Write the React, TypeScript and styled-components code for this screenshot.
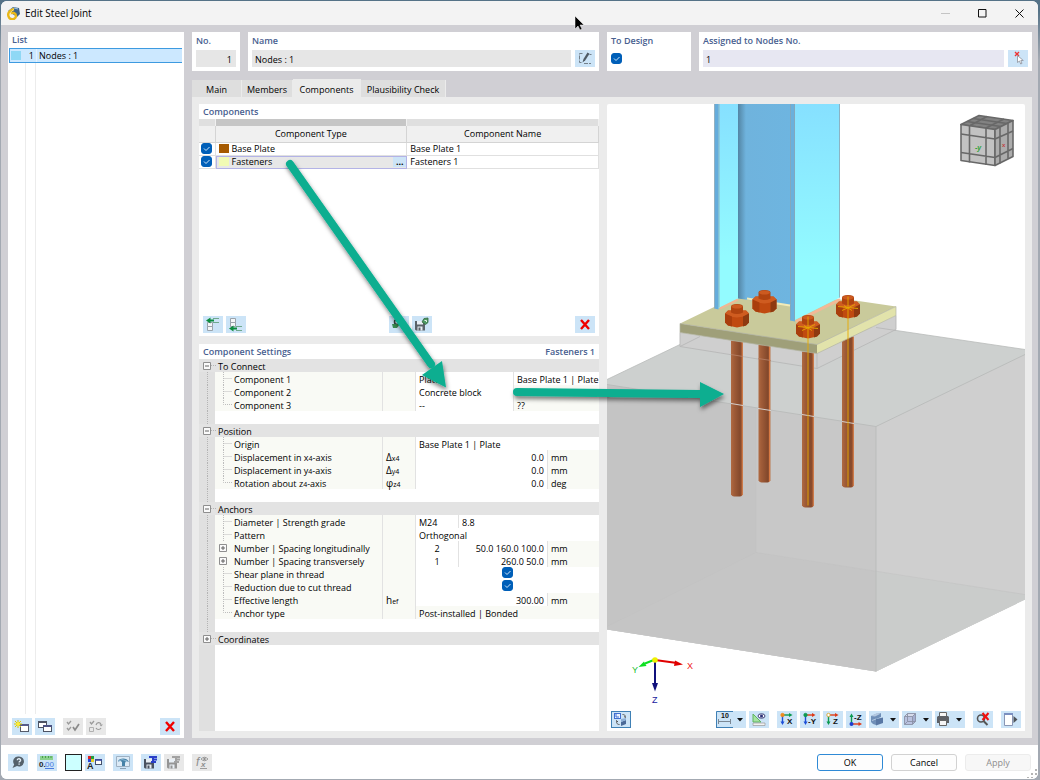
import React, { useState } from "react";
import styled, { createGlobalStyle, css } from "styled-components";

const blue = "#48608f";
const tint = "#cce4f7";

const Global = createGlobalStyle`
  *, *::before, *::after { box-sizing: border-box; }
  html, body { margin: 0; padding: 0; }
  body {
    background: #8f99a3;
    color: #000;
    font-family: "Open Sans", "Noto Sans", sans-serif;
    font-size: 9px;
    font-weight: 500;
    line-height: 13px;
  }
  button, input { font: inherit; color: inherit; }
`;

const Desktop = styled.div`
  position: relative;
  display: flex;
  min-height: 100vh;
  padding: 1px 2px 1px 1px;
  background: linear-gradient(#557287 0 10px, #a3a9b2 60px);
`;

const Window = styled.div`
  flex: 1;
  min-width: 0;
  display: flex;
  flex-direction: column;
  border-radius: 6px;
  overflow: hidden;
  background: #fff;
`;

const TitleBar = styled.header`
  display: flex;
  align-items: center;
  height: 24px;
  padding: 0 0 0 6px;
  background: #f3f3f3;
`;

const Title = styled.h1`
  flex: 1;
  margin: 0 0 0 4px;
  font-size: 10px;
  font-weight: 400;
`;

const CaptionButton = styled.button<{ $dim?: boolean }>`
  width: 37px;
  height: 24px;
  padding: 0;
  border: 0;
  background: none;
  display: grid;
  place-items: center;
  color: ${(p) => (p.$dim ? "#c4c4c4" : "#111")};
`;

const Main = styled.main`
  flex: 1;
  display: grid;
  grid-template-columns: 176px minmax(0, 1fr);
  gap: 8px;
  padding: 7px;
  padding-right: 6px;
  background: #d0cfd4;
`;

const Panel = styled.section`
  display: flex;
  flex-direction: column;
  min-width: 0;
  background: #fff;
`;

const PanelTitle = styled.h2`
  display: flex;
  justify-content: space-between;
  height: 15px;
  margin: 0;
  padding: 0 4px;
  font-size: 9px;
  font-weight: 600;
  line-height: 15px;
  color: ${blue};
`;

const NodeList = styled.ul`
  flex: 1;
  display: flex;
  flex-direction: column;
  list-style: none;
  margin: 0;
  padding: 1px 2px 0 1px;
`;

const ListGrid = css`
  display: grid;
  grid-template-columns: 17px 10px 1fr;
`;

const NodeItem = styled.button`
  ${ListGrid}
  align-items: center;
  width: 100%;
  height: 15px;
  padding: 0;
  text-align: left;
  border: 1px solid #3d9ae0;
  border-right: 0;
  background: #cce8ff;
`;

const NodeCell = styled.span<{ $end?: boolean }>`
  height: 13px;
  padding: 0 ${(p) => (p.$end ? 2 : 0)}px 0 ${(p) => (p.$end ? 0 : 2)}px;
  text-align: ${(p) => (p.$end ? "right" : "left")};
  border-right: ${(p) => (p.$end ? "1px solid #e4f2fb" : "0")};
`;

const Swatch = styled.span<{ $color: string }>`
  flex: none;
  display: block;
  width: 10px;
  height: 9px;
  margin: 0 1px;
  background: ${(p) => p.$color};
`;

const ListFiller = styled.li`
  ${ListGrid}
  flex: 1;
  span { border-right: 1px solid #ececec; }
  span:last-child { border: 0; }
`;

const ButtonBar = styled.div<{ $top?: number }>`
  flex: none;
  display: flex;
  gap: 3px;
  padding: ${(p) => p.$top ?? 0}px 4px 3px;
`;

const Gap = styled.span<{ $w?: number }>`
  flex: ${(p) => (p.$w ? `0 0 ${p.$w}px` : "1")};
`;

const IconButton = styled.button<{ $wide?: boolean; $framed?: boolean }>`
  flex: none;
  display: flex;
  align-items: center;
  width: ${(p) => (p.$wide ? 30 : 20)}px;
  height: 17px;
  padding: 0;
  border: 0;
  background: ${tint};
  box-shadow: ${(p) => (p.$framed ? "inset 0 0 0 1px #3f80b5" : "none")};
  &:disabled { background: #e8e8e8; }
  svg { display: block; flex: none; }
`;

const ColorButton = styled.button`
  width: 17px;
  height: 17px;
  border: 1px solid #222;
  background: #ccffff;
  padding: 0;
`;

const Workspace = styled.div`
  display: flex;
  flex-direction: column;
  min-width: 0;
`;

const Cards = styled.div`
  display: grid;
  grid-template-columns: minmax(0, 407fr) minmax(0, 425fr);
  gap: 8px;
  margin-bottom: 8px;
`;

const CardPair = styled.div<{ $first: number }>`
  display: grid;
  grid-template-columns: ${(p) => p.$first}px minmax(0, 1fr);
  gap: 8px;
`;

const Card = styled.div`
  display: flex;
  flex-direction: column;
  gap: 2px;
  height: 39px;
  padding: 0 4px 4px;
  background: #fff;
`;

const CardLabel = styled.label`
  height: 16px;
  line-height: 17px;
  font-weight: 600;
  color: ${blue};
`;

const CardRow = styled.div`
  display: flex;
  gap: 4px;
  align-items: center;
  min-height: 17px;
`;

const Field = styled.input<{ $end?: boolean; $lilac?: boolean }>`
  flex: 1;
  min-width: 0;
  height: 17px;
  padding: 1px 4px 0 3px;
  border: 0;
  border-radius: 0;
  text-align: ${(p) => (p.$end ? "right" : "left")};
  background: ${(p) => (p.$lilac ? "#e7e7f2" : "#e6e6e6")};
`;

const Tabs = styled.div`
  display: flex;
  align-items: flex-end;
  height: 18px;
`;

const Tab = styled.button<{ $active: boolean; $w: number }>`
  width: ${(p) => p.$w}px;
  height: ${(p) => (p.$active ? 18 : 17)}px;
  padding: 2px 0 0;
  border: 0;
  border-right: 1px solid #ebebeb;
  background: ${(p) => (p.$active ? "#ebebeb" : "#dedede")};
`;

const TabBody = styled.div`
  flex: 1;
  display: grid;
  grid-template-columns: minmax(0, 400fr) minmax(0, 418fr);
  gap: 8px;
  padding: 7px;
  background: #ebebeb;
`;

const Column = styled.div`
  display: grid;
  grid-template-rows: 232px minmax(0, 1fr);
  gap: 8px;
`;

const Table = styled.table`
  width: 100%;
  table-layout: fixed;
  border-collapse: collapse;
`;

const Strip = styled.th<{ $dark?: boolean }>`
  height: 7px;
  padding: 0;
  background: ${(p) => (p.$dark ? "#c6c6c6" : "#dfdfdf")};
  border-right: 1px solid #f0f0f0;
`;

const Head = styled.th`
  height: 16px;
  padding: 0;
  font-weight: 500;
  background: #f0f0f0;
  border-right: 1px solid #d4d4d4;
  border-bottom: 1px solid #d4d4d4;
`;

const Cell = styled.td<{ $active?: boolean; $tight?: boolean }>`
  height: 13px;
  padding: 0 0 0 ${(p) => (p.$tight ? 2 : 3)}px;
  line-height: 12px;
  border-right: 1px solid #e0e0e0;
  border-bottom: 1px solid #e0e0e0;
  ${(p) =>
    p.$active &&
    css`
      background: #e7e7e7;
      border-color: #b3b3e6;
      box-shadow: inset 1px 0 #b3b3e6, inset 0 1px #b3b3e6;
    `}
`;

const TypeContent = styled.div`
  display: flex;
  align-items: center;
  gap: 2px;
`;

const MoreButton = styled.button`
  width: 13px;
  height: 10px;
  margin-left: auto;
  padding: 0;
  border: 0;
  font-weight: 700;
  line-height: 6px;
  background: ${tint};
`;

const CheckBox = styled.span`
  display: inline-grid;
  width: 11px;
  height: 11px;
  vertical-align: top;
  > * { grid-area: 1 / 1; }
  input {
    appearance: none;
    width: 11px;
    height: 11px;
    margin: 0;
    border: 1px solid #005fb8;
    border-radius: 3px;
    background: #fff;
  }
  input:checked { background: #005fb8; }
  svg { pointer-events: none; }
`;

const Tree = styled.div`
  flex: 1;
  display: flex;
  flex-direction: column;
`;

const Gutter = styled.div`
  flex: none;
  width: 16px;
  background: #e0e0e0;
  display: flex;
  justify-content: center;
`;

const GutterLine = styled.span`
  border-left: 1px dotted #b4b4b4;
`;

const GroupRow = styled.div`
  display: flex;
  align-items: center;
  height: 13px;
  background: #e3e3e3;
`;

const GroupName = styled.span`
  padding-top: 2px;
`;

const Dash = styled.span`
  width: 5px;
  margin-right: 2px;
  border-top: 1px dotted #b4b4b4;
`;

const Toggle = styled.button`
  flex: none;
  width: 8px;
  height: 8px;
  margin-left: 4px;
  padding: 0;
  border: 0;
  background: none;
  svg { display: block; }
`;

const PropRow = styled.div`
  display: flex;
  height: 13px;
  line-height: 15px;
`;

const PropLabel = styled.div`
  flex: 0 0 168px;
  display: flex;
  align-items: flex-start;
  background: #f9faf5;
  border-right: 1px solid #e2e2e2;
  white-space: nowrap;
`;

const Branch = styled.span`
  flex: none;
  display: flex;
  align-items: center;
  width: 19px;
  height: 13px;
  svg { display: block; }
`;

const Symbol = styled.div`
  flex: 0 0 33px;
  padding-left: 3px;
  background: #f9faf5;
  border-right: 1px solid #e2e2e2;
  font-size: 10px;
`;

const Sub = styled.span`
  font-size: 7px;
`;

const Value = styled.div<{ $w?: number; $align?: string; $shade?: boolean; $line?: boolean }>`
  flex: ${(p) => (p.$w ? `0 0 ${p.$w}px` : "1 1 0")};
  min-width: 0;
  padding: 0 3px;
  overflow: hidden;
  white-space: nowrap;
  text-align: ${(p) => p.$align ?? "left"};
  background: ${(p) => (p.$shade ? "#f9faf5" : "#fff")};
  border-right: ${(p) => (p.$line ? "1px solid #e2e2e2" : "0")};
`;

const GutterFill = styled.div`
  flex: 1;
  display: flex;
`;

const Viewer = styled.section`
  display: flex;
  flex-direction: column;
  min-width: 0;
  background: #fff;
  border-radius: 2px 2px 0 0;
  overflow: hidden;
`;

const Scene = styled.svg`
  flex: 1 1 0;
  min-height: 0;
  width: 100%;
  display: block;
`;

const Footer = styled.footer`
  display: flex;
  align-items: center;
  gap: 3px;
  height: 34px;
  padding: 0 7px;
  background: #fff;
`;

const DialogButton = styled.button<{ $primary?: boolean }>`
  width: 66px;
  height: 17px;
  padding: 0;
  border: 1px solid ${(p) => (p.$primary ? "#2f8ad6" : "#d2d2d2")};
  border-radius: 3px;
  background: #fdfdfd;
  &:disabled {
    color: #8d8d8d;
    background: #f7f7f7;
    border-color: #ececec;
  }
`;

const DialogButtons = styled.div`
  display: flex;
  gap: 8px;
  margin-left: auto;
`;

const Annotation = styled.svg`
  position: absolute;
  left: 0;
  top: 0;
  width: 100%;
  height: 100%;
  pointer-events: none;
`;

/* ---------- icons: all drawn on a 20 x 17 field ---------- */

const Ico = ({ children, w = 20 }: { children: React.ReactNode; w?: number }) => (
  <svg width={w} height="17" viewBox={`0 0 ${w} 17`} fill="none" aria-hidden="true">
    {children}
  </svg>
);

const DeleteIcon = () => (
  <Ico>
    <path d="M6 4l8 9M14 4l-8 9" stroke="#f00000" strokeWidth="2.4" />
  </Ico>
);
const NewIcon = () => (
  <Ico>
    <rect x="8.500" y="6.500" width="8" height="7" fill="#fff" stroke="#555b6a" />
    <path d="M8 7h9" stroke="#555b8a" strokeWidth="2" />
    <path d="M6 2v8M2 6h8M3 3l6 6M9 3l-6 6" stroke="#d9c800" />
    <circle cx="6" cy="6" r="1.800" fill="#ffee33" />
  </Ico>
);
const CopyIcon = () => (
  <Ico>
    <rect x="3.500" y="3.500" width="8" height="6" fill="#fff" stroke="#4c5364" />
    <path d="M3 4h9" stroke="#4c5364" strokeWidth="2" />
    <rect x="8.500" y="7.500" width="8" height="6" fill="#fff" stroke="#4c5364" />
    <path d="M8 8h9" stroke="#4c5384" strokeWidth="2" />
  </Ico>
);
const ChecksIcon = ({ second }: { second?: boolean }) => (
  <Ico>
    <path d="M4 4l1.500 2L8 3" stroke="#9a9a9a" strokeWidth="1.300" />
    {second ? (
      <>
        <path d="M3.500 9.500h4v4h-4z" stroke="#b0b0b0" />
        <path d="M10 7c1-3 4-3 5-.5M10 10c1 2 4 2 5 0" stroke="#9a9a9a" strokeWidth="1.200" />
        <path d="M13.500 6.500h3.500l-2 2z" fill="#9a9a9a" />
      </>
    ) : (
      <>
        <path d="M4 10l1.500 2L8 9" stroke="#9a9a9a" strokeWidth="1.300" />
        <path d="M10 9l2 3 4-6" stroke="#8a8a8a" strokeWidth="1.700" />
      </>
    )}
  </Ico>
);
const EditIcon = () => (
  <Ico>
    <path d="M7.500 3.500h-3v9h3" stroke="#74808a" strokeDasharray="4 1" />
    <path d="M9 13.500h7M14.500 4.500h2" stroke="#74808a" strokeDasharray="4 1" />
    <path d="M7.500 12.500l1-3.500 4-6.500 2 1.300-4.200 6.500z" fill="#4f5b66" />
  </Ico>
);
const PickIcon = () => (
  <Ico>
    <path d="M7 2l4 4M11 2l-4 4" stroke="#e33" strokeWidth="1.300" />
    <path d="M9.500 5.500v7l2-1.500 1.200 3 1.300-.6-1.200-2.900h2.500z" fill="#fff" stroke="#8b8f99" strokeWidth=".8" />
  </Ico>
);
const InsertIcon = ({ below }: { below?: boolean }) => (
  <Ico>
    <path
      d={below ? "M4.500 2.500h5v4h-5zM4.500 6.500h5v4h-5z" : "M4.500 6.500h5v4h-5zM4.500 10.500h5v4h-5z"}
      fill="#f4f6f8"
      stroke="#9aa3ab"
    />
    <g transform={below ? "translate(0 8)" : undefined}>
      <path d="M3 4.500L7.500 1.500v2H11v2H7.500v2z" fill="#0c8c3f" />
      <path d="M10 2.500h6M10 6.500h6" stroke="#6fa88d" />
    </g>
  </Ico>
);
const Disk = ({ c }: { c: string }) => (
  <>
    <path d="M3 5h10v9.500H4L3 13.500z" fill={c} />
    <path d="M5 5h6v3.500H5z" fill="#e8eef4" />
    <path d="M5.500 10.500h5v4h-5z" fill="#e8eef4" />
    <path d="M6.500 11.500H8.500v3h-2z" fill={c} />
  </>
);
const SaveIcon = () => (
  <Ico>
    <Disk c="#5a6268" />
    <path d="M10 6l2-3.500L16 2v4.500l-2.500 2z" fill="#4d9a62" stroke="#35663f" strokeWidth=".8" />
    <path d="M12.500 4.500h2v1.500" stroke="#e4f2e8" />
  </Ico>
);
const SaveProfileIcon = ({ back, mark }: { back: string; mark: string }) => (
  <Ico>
    <Disk c={back} />
    <path d="M8 3h8M10 8h5M12 3v5M12 5.500h4" stroke={mark} strokeWidth="2" />
  </Ico>
);
const LoadIcon = () => (
  <Ico>
    <circle cx="8" cy="6" r="2.500" stroke="#34453f" strokeWidth="1.500" />
    <path d="M3 8h8l-3 4H4z" fill="#3b8a52" />
  </Ico>
);
const HelpIcon = () => (
  <Ico>
    <path d="M11 2.500a5 5 0 1 1-2 9.600L4.500 14l1.700-3.600A5 5 0 0 1 11 2.500z" fill="#55616b" />
    <path d="M9.300 6.200c0-2 3.600-1.900 3.300.2-.2 1-1.500 1-1.500 2.100M11.100 9.500v1.300" stroke="#e6f1fa" strokeWidth="1.300" />
  </Ico>
);

interface GlyphProps {
  x: number;
  y: number;
  size?: number;
  fill: string;
  light?: boolean;
  italic?: boolean;
  children: React.ReactNode;
}
const Glyph = ({ x, y, size = 7, fill, light, italic, children }: GlyphProps) => (
  <text
    x={x}
    y={y}
    fontFamily="Liberation Sans, sans-serif"
    fontSize={size}
    fontWeight={light ? 400 : 700}
    fontStyle={italic ? "italic" : undefined}
    fill={fill}
  >
    {children}
  </text>
);

const UnitsIcon = () => (
  <Ico>
    <path d="M3 2h13v4H3z" fill="#8bd18d" />
    <path d="M5.500 2v2M8.500 2v2M11.500 2v2M14 2v2" stroke="#4aa04e" />
    <Glyph x={2} y={13} size={8} fill="#222">0.</Glyph>
    <Glyph x={8} y={13} size={8} fill="#4a7be0" light>00</Glyph>
    <path d="M8 14.500h9" stroke="#4a7be0" />
  </Ico>
);
const FontIcon = () => (
  <Ico>
    <path d="M3 2h3v3H3z" fill="#e02020" />
    <path d="M6 2h3v3H6z" fill="#22a040" />
    <path d="M3 5h3v3H3z" fill="#2846d8" />
    <path d="M6 5h3v3H6z" fill="#e8d020" />
    <Glyph x={2} y={15} size={9} fill="#222">A</Glyph>
    <rect x="10.500" y="5.500" width="6" height="5" fill="#fff" stroke="#45506a" />
    <path d="M10 6h7" stroke="#3a4aa0" strokeWidth="1.600" />
  </Ico>
);
const ScreenIcon = () => (
  <Ico>
    <path d="M3.500 2.500h13v10h-13z" fill="#dceaf6" stroke="#9db0c2" />
    <path d="M5 7c1-3 9-4 11 1l-3-1-1 2v3h-3V8L7 6.500z" fill="#4682a8" />
    <path d="M5 7.500l4-2 5 1.500" stroke="#86b4d0" />
    <path d="M7 14.500h6" stroke="#8aa0b5" />
  </Ico>
);
const FormulaIcon = () => (
  <Ico>
    <Glyph x={4} y={12} size={12} fill="#8e8e8e" light italic>f</Glyph>
    <Glyph x={9} y={13} size={8} fill="#8e8e8e" italic>x</Glyph>
    <path d="M9 5q3.500-3.500 7 0-3.500 3.500-7 0z" stroke="#9c9c9c" />
    <circle cx="12.500" cy="5" r="1.200" fill="#8e8e8e" />
    <path d="M8 14.500h7" stroke="#9c9c9c" />
  </Ico>
);
const Caret = () => (
  <svg width="10" height="17" viewBox="0 0 10 17" aria-hidden="true">
    <path d="M1 7h6L4 10.500z" fill="#111" />
  </svg>
);
const SyncIcon = () => (
  <Ico>
    <rect x="3.500" y="2.500" width="6" height="5" fill="#eaf3ff" stroke="#3f6fd0" />
    <path d="M5 3v3h3" stroke="#3f6fd0" />
    <path d="M11.500 3.500c3 0 3 2 3 3l-1.500-1M8.500 13.500c-3 0-3-2-3-4l1.500 1.500" stroke="#555" />
    <path d="M10 11l5-2v4l-5 2z" fill="#4a6a98" />
    <path d="M10 8l5-1v2l-5 2z" fill="#8db0d8" />
  </Ico>
);
const DimensionIcon = () => (
  <Ico>
    <path d="M.5 17V.5H17M.5 16.500H17" stroke="#3f80b5" />
    <Glyph x={5} y={7} fill="#111">10</Glyph>
    <path d="M2.500 8v5M14.500 8v5M3 10.500h11" stroke="#7b8894" />
  </Ico>
);
const RulerEyeIcon = () => (
  <Ico>
    <path d="M4 3v8h8z" fill="#a6e3a2" stroke="#5fb45f" />
    <path d="M4 12h12v2.500H4z" fill="#f2f2f2" stroke="#999" strokeWidth=".7" />
    <ellipse cx="12.500" cy="5" rx="3.500" ry="2.200" fill="#fff" stroke="#3b3f78" />
    <circle cx="12.500" cy="5" r="1.500" fill="#2b2f78" />
  </Ico>
);
const ViewIcon = ({ kind }: { kind: "X" | "-Y" | "Z" | "-Z" }) => {
  const h = kind === "X" ? "#0c9a50" : "#dd3a18";
  const v = kind === "X" || kind === "-Y" ? "#1d4fd8" : "#0c9a50";
  const dot = { X: "#f08a1c", "-Y": "#0c9a50", Z: "#fff", "-Z": "#1d3fd0" }[kind];
  return (
    <Ico>
      {kind === "-Z" ? (
        <>
          <path d="M5.500 5v8" stroke={v} strokeWidth="1.400" />
          <path d="M3.500 6l2-3.500 2 3.500z" fill={v} />
          <path d="M5.500 13h8" stroke={h} strokeWidth="1.400" />
          <path d="M12.500 11l3.500 2-3.500 2z" fill={h} />
          <circle cx="5.500" cy="13" r="2" fill={dot} />
          <Glyph x={8} y={9} size={8} fill="#111">-Z</Glyph>
        </>
      ) : (
        <>
          <path d="M5.500 4v8" stroke={v} strokeWidth="1.400" />
          <path d="M3.500 10.500l2 3.500 2-3.500z" fill={v} />
          <path d="M5.500 4h8" stroke={h} strokeWidth="1.400" />
          <path d="M12 2l3.500 2L12 6z" fill={h} />
          <circle cx="5.500" cy="4" r="1.700" fill={dot} stroke={kind === "Z" ? "#d8a020" : dot} strokeWidth=".8" />
          <Glyph x={kind === "-Y" ? 8 : 10} y={13} size={8} fill="#111">{kind}</Glyph>
        </>
      )}
    </Ico>
  );
};
const RenderIcon = () => (
  <Ico>
    <path d="M2 5l6-2.500 4-.500v4L7 8v6l-3-1-2-2z" fill="#6f8fb8" />
    <path d="M2 5l6-3 4 .5-6 3z" fill="#b4c8e0" />
    <path d="M7 8l7-1.500V12L7 14.500z" fill="#5877a4" />
    <path d="M3 9.500l4-1.500" stroke="#b4c8e0" />
  </Ico>
);
const BoxIcon = () => (
  <Ico>
    <path d="M2.500 5.500h8v8h-8z" fill="#b9c2e0" />
    <path d="M2.500 5.500l3-3h8l-3 3z" fill="#d7dcec" />
    <path d="M10.500 5.500l3-3v8l-3 3z" fill="#a5aed0" />
    <path d="M2.500 5.500h8v8h-8zM2.500 5.500l3-3h8v8l-3 3M10.500 5.500l3-3M5.500 2.500v8h8M5.500 10.500l-3 3" stroke="#8a91a6" strokeWidth=".9" />
  </Ico>
);
const PrintIcon = () => (
  <Ico>
    <path d="M4.500 1.500h7V6h-7z" fill="#f6f6f6" stroke="#666" />
    <path d="M2 6l1-1h10l1 1v6H2z" fill="#5d6066" />
    <path d="M4.500 9.500h7v5h-7z" fill="#f6f6f6" stroke="#666" />
  </Ico>
);
const ZoomOffIcon = () => (
  <Ico>
    <circle cx="8" cy="7.500" r="3.500" stroke="#555" strokeWidth="1.600" />
    <path d="M10.500 10l4 4" stroke="#555" strokeWidth="2" />
    <path d="M9.500 2l6 7M15.500 2l-6 7" stroke="#f01010" strokeWidth="2" />
  </Ico>
);
const PanelIcon = () => (
  <Ico>
    <path d="M3.500 2.500h8v12h-8z" fill="#fff" stroke="#8a96b4" />
    <path d="M3 3h9" stroke="#7a8fc0" strokeWidth="2" />
    <path d="M12.500 5l4 3.500-4 3.500z" fill="#4d5258" />
  </Ico>
);
const AppIcon = () => (
  <svg width="14" height="14" viewBox="0 0 14 14" aria-hidden="true">
    <path d="M1 5l5-4 6 1 1 6-3 3z" fill="#3e6488" />
    <path d="M3 4l4-2 4 1" stroke="#9cc4e4" fill="none" />
    <path d="M7 3C2 4 0 8 2 11.500c2 3 7 2 7-1.500 0-3-3-4-5-2.500" fill="none" stroke="#e9b818" strokeWidth="2.400" />
    <path d="M7 3.500C4 5 3 7 3.500 9" fill="none" stroke="#fff0a0" strokeWidth=".8" />
  </svg>
);

/* ---------- small parts ---------- */

function Check({ label, id }: { label: string; id?: string }) {
  return (
    <CheckBox>
      <input id={id} type="checkbox" defaultChecked aria-label={id ? undefined : label} />
      <svg width="11" height="11" viewBox="0 0 11 11" fill="none" aria-hidden="true">
        <path d="M3 5.500l2 2 3.500-3.500" stroke="#cfe6fa" />
      </svg>
    </CheckBox>
  );
}

function Expander({ open, label, onClick }: { open: boolean; label: string; onClick?: () => void }) {
  return (
    <Toggle aria-label={label} aria-expanded={open} onClick={onClick}>
      <svg width="8" height="8" viewBox="0 0 8 8" fill="none">
        <path d="M.5.5h7v7h-7z" fill="#fafafa" stroke="#8f8f8f" />
        <path d={open ? "M2 4h4" : "M2 4h4M4 2v4"} stroke="#555" strokeWidth=".9" />
      </svg>
    </Toggle>
  );
}

interface Prop {
  label: React.ReactNode;
  symbol?: React.ReactNode;
  expand?: boolean;
  values: React.ReactNode;
}

const axis = (a: string) => (
  <span>
    {a}<Sub>4</Sub>-axis
  </span>
);

const measured = (n: string, unit: string) => (
  <>
    <Value $w={132} $align="right" $line>{n}</Value>
    <Value $shade>{unit}</Value>
  </>
);

const counted = (n: string, spacing: string) => (
  <>
    <Value $w={43} $align="center" $line>{n}</Value>
    <Value $w={89} $align="right" $line>{spacing}</Value>
    <Value $shade>mm</Value>
  </>
);

const groups: { name: string; props: Prop[] }[] = [
  {
    name: "To Connect",
    props: [
      { label: "Component 1", values: <><Value $w={98} $line>Plate</Value><Value>Base Plate 1 | Plate</Value></> },
      { label: "Component 2", values: <><Value $w={98} $line>Concrete block</Value><Value $shade /></> },
      { label: "Component 3", values: <><Value $w={98} $line>--</Value><Value $shade>??</Value></> },
    ],
  },
  {
    name: "Position",
    props: [
      { label: "Origin", values: <Value>Base Plate 1 | Plate</Value> },
      { label: <span>Displacement in {axis("x")}</span>, symbol: <>Δ<Sub>x4</Sub></>, values: measured("0.0", "mm") },
      { label: <span>Displacement in {axis("y")}</span>, symbol: <>Δ<Sub>y4</Sub></>, values: measured("0.0", "mm") },
      { label: <span>Rotation about {axis("z")}</span>, symbol: <>φ<Sub>z4</Sub></>, values: measured("0.0", "deg") },
    ],
  },
  {
    name: "Anchors",
    props: [
      { label: "Diameter | Strength grade", values: <><Value $w={43} $line>M24</Value><Value>8.8</Value></> },
      { label: "Pattern", values: <Value>Orthogonal</Value> },
      { label: "Number | Spacing longitudinally", expand: true, values: counted("2", "50.0 160.0 100.0") },
      { label: "Number | Spacing transversely", expand: true, values: counted("1", "260.0 50.0") },
      { label: "Shear plane in thread", values: <Value $align="center"><Check label="Shear plane in thread" /></Value> },
      { label: "Reduction due to cut thread", values: <Value $align="center"><Check label="Reduction due to cut thread" /></Value> },
      { label: "Effective length", symbol: <>h<Sub>ef</Sub></>, values: measured("300.00", "mm") },
      { label: "Anchor type", values: <Value $shade>Post-installed | Bonded</Value> },
    ],
  },
  { name: "Coordinates", props: [] },
];

function SettingsTree() {
  const [open, setOpen] = useState<Record<string, boolean>>({
    "To Connect": true,
    Position: true,
    Anchors: true,
  });
  return (
    <Tree>
      {groups.map((g) => (
        <React.Fragment key={g.name}>
          <GroupRow>
            <Expander
              open={!!open[g.name]}
              label={g.name}
              onClick={() => setOpen({ ...open, [g.name]: !open[g.name] })}
            />
            <Dash />
            <GroupName>{g.name}</GroupName>
          </GroupRow>
          {open[g.name] &&
            g.props.map((p, i) => (
              <PropRow key={i}>
                <Gutter><GutterLine /></Gutter>
                <PropLabel>
                  <Branch>
                    {p.expand ? (
                      <Expander open={false} label={String(p.label)} />
                    ) : (
                      <svg width="19" height="13" viewBox="0 0 19 13" fill="none" aria-hidden="true">
                        <path
                          d={i === g.props.length - 1 ? "M8.500 0v6.500H17" : "M8.500 0v13M8.500 6.500H17"}
                          stroke="#bdbdbd"
                          strokeDasharray="1 1"
                        />
                      </svg>
                    )}
                  </Branch>
                  {p.label}
                </PropLabel>
                <Symbol>{p.symbol}</Symbol>
                {p.values}
              </PropRow>
            ))}
          {open[g.name] && (
            <PropRow>
              <Gutter><GutterLine /></Gutter>
            </PropRow>
          )}
        </React.Fragment>
      ))}
      <GutterFill>
        <Gutter />
      </GutterFill>
    </Tree>
  );
}

/* ---------- 3D scene ---------- */

function Rod({ x, top, bottom }: { x: number; top: number; bottom: number }) {
  return <path d={`M${x - 6} ${top}h12v${bottom - top - 2}q-1 2 -3 2h-6q-2 0 -3-2z`} fill="url(#rod)" />;
}

function Nut({ x, y, marked, end }: { x: number; y: number; marked?: boolean; end?: number }) {
  return (
    <g>
      <path d={`M${x - 12} ${y - 4}l3-3h18l3 3v9l-3 3-9 2-9-2-3-3z`} fill="#c04a10" />
      <path d={`M${x - 12} ${y - 4}l3-3h18l3 3-5 3-7 1-8-1z`} fill="#cf5c20" />
      <path d={`M${x - 12} ${y - 4}l7 3v10l-4-1-3-3z`} fill="#a93e0c" />
      <path d={`M${x + 6} ${y - 1}l6-3v9l-3 3-3 1z`} fill="#8e3a10" />
      <path d={`M${x - 6} ${y - 11}q0-2.500 6-2.500t6 2.500v6q-6 3-12 0z`} fill="#b04410" />
      <ellipse cx={x} cy={y - 11} rx="5.500" ry="2" fill="#cc5a20" />
      {marked && (
        <g stroke="#e8a800" strokeWidth=".9">
          <path d={`M${x - 10} ${y - 2}l20 2M${x - 6} ${y + 2}l13-6M${x - 4} ${y - 3}l8 5`} />
          <path d={`M${x} ${y - 12}V${end}`} />
        </g>
      )}
    </g>
  );
}

function JointScene() {
  return (
    <Scene viewBox="607 104 418 604" preserveAspectRatio="xMidYMid slice" fill="none" role="img" aria-label="Steel joint model">
      <defs>
        <linearGradient id="rod" x1="0" x2="1" y1="0" y2="0">
          <stop offset="0" stopColor="#b06a42" />
          <stop offset=".25" stopColor="#a05c38" />
          <stop offset=".75" stopColor="#84492c" />
          <stop offset=".86" stopColor="#92502f" />
          <stop offset=".92" stopColor="#dc7c44" />
          <stop offset="1" stopColor="#b87850" />
        </linearGradient>
        <linearGradient id="cyan" x1="0" x2="0" y1="0" y2="1">
          <stop offset="0" stopColor="#86e0ff" />
          <stop offset=".75" stopColor="#93fbff" />
        </linearGradient>
        <linearGradient id="web" x1="0" x2="1" y1="0" y2="0">
          <stop offset="0" stopColor="#5385a4" />
          <stop offset=".15" stopColor="#6fb3dd" />
          <stop offset="1" stopColor="#6eb5e0" />
        </linearGradient>
      </defs>

      <path d="M607 380l73-35 86-31 110 14 149 22v250l-149 72-269-42z" fill="#cdd0cf" />
      <path d="M607 385l269 42v245l-269-42z" fill="#c8c8c8" />
      <path d="M607 385l149 23v145l-149 74z" fill="#c4c4c4" />
      <path d="M876 427l149-72v245l-149 72z" fill="#cfcfcf" />
      <path d="M756 553l120 19v100l-269-42v-3z" fill="#c5c5c5" />
      <path d="M876 572l149 23v5l-149 72z" fill="#cacccb" />
      <path d="M756 408v145l269 42M756 553l-149 74" stroke="#c0c1c0" strokeWidth=".5" />
      <path d="M876 427v245M607 385l269 42 149-72" stroke="#b9bbba" strokeWidth=".9" />
      <path d="M607 380l73-35M876 328l149 22" stroke="#b9bbba" strokeWidth=".8" />

      <path d="M680 333l137 21 79-38v14l-79 38-137-21z" fill="#cfcfcf" />
      <path d="M680 333v14l20-10M680 347l137 22 79-39v-14M817 354v15M876 328l20 3" stroke="#b8b8b8" strokeWidth=".9" />

      <Rod x={737} top={341} bottom={497} />
      <Rod x={764.5} top={345} bottom={483} />
      <Rod x={808} top={352} bottom={508} />
      <Rod x={848} top={337} bottom={488} />
      <path d="M731 404l12 2M758 409l13 2M802 415l12 2M842 422l12 2" stroke="#dcdcdc" strokeWidth=".9" />
      <path d="M731 355l12 2M758 359l13 2" stroke="#b9836a" strokeWidth=".8" />

      <path d="M680 324l62-30 113 7 41 6-79 38z" fill="#c9ca9b" />
      <path d="M680 324l137 21v9l-137-21z" fill="#9f9f79" />
      <path d="M817 345l79-38v9l-79 38z" fill="#e2e3ab" />
      <path d="M680 324l137 21 79-38M680 324v9l137 21 79-38v-9" stroke="#b3b4a4" strokeWidth=".7" />

      <path d="M718 104h21v195l-21 10z" fill="url(#cyan)" />
      <path d="M738 104h53v202l-53-7z" fill="url(#web)" />
      <path d="M714.500 104h4v206l-4-1z" fill="#65acdb" />
      <path d="M794 104h46v194l-46 23z" fill="url(#cyan)" />
      <path d="M790 104h5v218l-5-1z" fill="#6ab0dc" />
      <path d="M719 104v204M790.500 104v216M794.500 104v216M839.500 104v194M714.500 104v205" stroke="#8ba6b4" strokeWidth=".8" />
      <path d="M720 309l18-9" stroke="#f0b795" strokeWidth="2" />
      <path d="M796 322l44-22" stroke="#f3b896" strokeWidth="2.600" />
      <path d="M747 299l43 7" stroke="#f2ebb8" strokeWidth="2" />

      <Nut x={764.5} y={304} />
      <Nut x={737} y={318} />
      <Nut x={808} y={329} marked end={506} />
      <Nut x={848} y={309} marked end={487} />

      <g stroke="#686868" strokeWidth="1.600" strokeLinejoin="round">
        <path d="M961 125l18-9 34 5-18 9z" fill="#828282" />
        <path d="M961 125l34 5v36l-34-5z" fill="#c2c2c2" />
        <path d="M995 130l18-9v36l-18 9z" fill="#acacac" />
        <path d="M969.500 126v37M986 128.500v37M961 134.500l34 5 18-8M961 153l34 5 18-9M1000 128v36M1008 123v36M967 122l34 5M973 119l34 5M970 126l17-9M986 128.500l18-9" />
      </g>
      <text x="975" y="150" fontFamily="Liberation Sans, sans-serif" fontWeight="700" fontStyle="italic" fontSize="7" fill="#2da338">-y</text>
      <text x="1002" y="147" fontFamily="Liberation Sans, sans-serif" fontWeight="700" fontSize="6" fill="#c04040">x</text>

      <path d="M655 660l-10 4" stroke="#0ce020" strokeWidth="2" />
      <path d="M638.500 667.500l5.500-5.500 2.500 4.500z" fill="#0ce020" />
      <path d="M655 660.500l22 3" stroke="#e00000" strokeWidth="2" />
      <path d="M683 665l-8-4-1 5.500z" fill="#e00000" />
      <path d="M655 661v24" stroke="#10107c" strokeWidth="2" />
      <path d="M655 692l-3-8.500h6z" fill="#10107c" />
      <circle cx="655" cy="660.500" r="2.800" fill="#f0f000" />
      <g fontFamily="Liberation Sans, sans-serif" fontSize="9">
        <text x="687" y="669" fill="#f02020">X</text>
        <text x="632" y="673" fill="#20c030">Y</text>
        <text x="652" y="703" fill="#2020a0">Z</text>
      </g>
    </Scene>
  );
}

const tabs: [string, number][] = [
  ["Main", 50],
  ["Members", 51],
  ["Components", 68],
  ["Plausibility Check", 85],
];

const rows = [
  { type: "Base Plate", name: "Base Plate 1", color: "#a65a00" },
  { type: "Fasteners", name: "Fasteners 1", color: "#f1fbb4" },
];

export default function App() {
  const [tab, setTab] = useState("Components");
  return (
    <>
      <Global />
      <Desktop>
        <Window>
          <TitleBar>
            <AppIcon />
            <Title>Edit Steel Joint</Title>
            <CaptionButton aria-label="Minimize" $dim>
              <svg width="9" height="9" viewBox="0 0 9 9" stroke="currentColor"><path d="M0 4.500h9" /></svg>
            </CaptionButton>
            <CaptionButton aria-label="Maximize">
              <svg width="9" height="9" viewBox="0 0 9 9" stroke="currentColor" fill="none"><path d="M.5.500h7.500v7.500H.5z" /></svg>
            </CaptionButton>
            <CaptionButton aria-label="Close">
              <svg width="9" height="9" viewBox="0 0 9 9" stroke="currentColor"><path d="M.5.500l8 8M8.500.500l-8 8" /></svg>
            </CaptionButton>
          </TitleBar>

          <Main>
            <Panel>
              <PanelTitle>List</PanelTitle>
              <NodeList>
                <li>
                  <NodeItem>
                    <Swatch $color="#8fd8f5" />
                    <NodeCell $end>1</NodeCell>
                    <NodeCell>Nodes : 1</NodeCell>
                  </NodeItem>
                </li>
                <ListFiller aria-hidden="true"><span /><span /><span /></ListFiller>
              </NodeList>
              <ButtonBar $top={4}>
                <IconButton aria-label="New"><NewIcon /></IconButton>
                <IconButton aria-label="Copy"><CopyIcon /></IconButton>
                <Gap $w={2} />
                <IconButton aria-label="Select all" disabled><ChecksIcon /></IconButton>
                <IconButton aria-label="Invert selection" disabled><ChecksIcon second /></IconButton>
                <Gap />
                <IconButton aria-label="Delete"><DeleteIcon /></IconButton>
              </ButtonBar>
            </Panel>

            <Workspace>
              <Cards>
                <CardPair $first={48}>
                  <Card>
                    <CardLabel htmlFor="no">No.</CardLabel>
                    <CardRow><Field id="no" defaultValue="1" $end /></CardRow>
                  </Card>
                  <Card>
                    <CardLabel htmlFor="name">Name</CardLabel>
                    <CardRow>
                      <Field id="name" defaultValue="Nodes : 1" />
                      <IconButton aria-label="Edit name"><EditIcon /></IconButton>
                    </CardRow>
                  </Card>
                </CardPair>
                <CardPair $first={84}>
                  <Card>
                    <CardLabel htmlFor="design">To Design</CardLabel>
                    <CardRow><Check id="design" label="To Design" /></CardRow>
                  </Card>
                  <Card>
                    <CardLabel htmlFor="nodes">Assigned to Nodes No.</CardLabel>
                    <CardRow>
                      <Field id="nodes" defaultValue="1" $lilac />
                      <IconButton aria-label="Select nodes"><PickIcon /></IconButton>
                    </CardRow>
                  </Card>
                </CardPair>
              </Cards>

              <Tabs role="tablist">
                {tabs.map(([name, w]) => (
                  <Tab key={name} role="tab" aria-selected={tab === name} $active={tab === name} $w={w} onClick={() => setTab(name)}>
                    {name}
                  </Tab>
                ))}
              </Tabs>

              <TabBody>
                <Column>
                  <Panel>
                    <PanelTitle>Components</PanelTitle>
                    <Table>
                      <colgroup>
                        <col width="16" />
                        <col />
                        <col />
                      </colgroup>
                      <thead>
                        <tr><Strip /><Strip $dark /><Strip /></tr>
                        <tr><Head /><Head>Component Type</Head><Head>Component Name</Head></tr>
                      </thead>
                      <tbody>
                        {rows.map((r, i) => (
                          <tr key={r.type}>
                            <Cell $tight><Check label={r.type} /></Cell>
                            <Cell $tight $active={i === 1}>
                              <TypeContent>
                                <Swatch $color={r.color} />
                                {r.type}
                                {i === 1 && <MoreButton aria-label="Choose type">...</MoreButton>}
                              </TypeContent>
                            </Cell>
                            <Cell>{r.name}</Cell>
                          </tr>
                        ))}
                      </tbody>
                    </Table>
                    <Gap />
                    <ButtonBar>
                      <IconButton aria-label="Insert above"><InsertIcon /></IconButton>
                      <IconButton aria-label="Insert below"><InsertIcon below /></IconButton>
                      <Gap />
                      <IconButton aria-label="Load"><LoadIcon /></IconButton>
                      <IconButton aria-label="Save"><SaveIcon /></IconButton>
                      <Gap $w={137} />
                      <IconButton aria-label="Delete component"><DeleteIcon /></IconButton>
                    </ButtonBar>
                  </Panel>

                  <Panel>
                    <PanelTitle>
                      <span>Component Settings</span>
                      <span>Fasteners 1</span>
                    </PanelTitle>
                    <SettingsTree />
                  </Panel>
                </Column>

                <Viewer>
                  <JointScene />
                  <ButtonBar $top={4}>
                    <IconButton aria-label="Synchronize" $framed><SyncIcon /></IconButton>
                    <Gap />
                    <IconButton aria-label="Dimensions" $wide><DimensionIcon /><Caret /></IconButton>
                    <IconButton aria-label="Show dimensions"><RulerEyeIcon /></IconButton>
                    <Gap $w={2} />
                    <IconButton aria-label="View X"><ViewIcon kind="X" /></IconButton>
                    <IconButton aria-label="View -Y"><ViewIcon kind="-Y" /></IconButton>
                    <IconButton aria-label="View Z"><ViewIcon kind="Z" /></IconButton>
                    <IconButton aria-label="View -Z"><ViewIcon kind="-Z" /></IconButton>
                    <IconButton aria-label="Rendering" $wide><RenderIcon /><Caret /></IconButton>
                    <IconButton aria-label="Box view" $wide><BoxIcon /><Caret /></IconButton>
                    <IconButton aria-label="Print" $wide><PrintIcon /><Caret /></IconButton>
                    <Gap $w={2} />
                    <IconButton aria-label="Reset zoom"><ZoomOffIcon /></IconButton>
                    <Gap $w={2} />
                    <IconButton aria-label="Show panel"><PanelIcon /></IconButton>
                  </ButtonBar>
                </Viewer>
              </TabBody>
            </Workspace>
          </Main>

          <Footer>
            <IconButton aria-label="Help"><HelpIcon /></IconButton>
            <Gap $w={3} />
            <IconButton aria-label="Units"><UnitsIcon /></IconButton>
            <Gap $w={2} />
            <ColorButton aria-label="Color" />
            <IconButton aria-label="Display"><FontIcon /></IconButton>
            <Gap $w={2} />
            <IconButton aria-label="View"><ScreenIcon /></IconButton>
            <Gap $w={2} />
            <IconButton aria-label="Save profile"><SaveProfileIcon back="#4a5260" mark="#2a3fc8" /></IconButton>
            <IconButton aria-label="Load profile" disabled><SaveProfileIcon back="#949494" mark="#a2a2a2" /></IconButton>
            <Gap $w={2} />
            <IconButton aria-label="Formula" disabled><FormulaIcon /></IconButton>
            <DialogButtons>
              <DialogButton $primary>OK</DialogButton>
              <DialogButton>Cancel</DialogButton>
              <DialogButton disabled>Apply</DialogButton>
            </DialogButtons>
          </Footer>
        </Window>

        <Annotation viewBox="0 0 1040 780" preserveAspectRatio="xMinYMin meet" aria-hidden="true">
          <defs>
            <filter id="shade" x="-10%" y="-30%" width="120%" height="160%">
              <feDropShadow dx="1" dy="3" stdDeviation="2" floodOpacity=".5" />
            </filter>
          </defs>
          <g stroke="#08ae90" strokeWidth="8" strokeLinecap="round" fill="none" filter="url(#shade)">
            <path d="M290 164L431 364" />
            <path d="M446 387.500l-24-12.500 20-14z" fill="#08ae90" stroke="none" />
          </g>
          <g filter="url(#shade)" fill="#08ae90">
            <path d="M517 388l183 2v-8l24 12-24 13v-9l-183-2a4 4 0 0 1 0-8z" />
          </g>
          <path d="M575 16v13l3-3 2 4 2-1-2-4h4z" fill="#000" stroke="#fff" strokeWidth=".5" />
          <path d="M1035 769h2v2h-2zM1031 773h2v2h-2zM1035 773h2v2h-2zM1027 777h2v1h-2zM1031 777h2v1h-2z" fill="#b5b5b5" />
        </Annotation>
      </Desktop>
    </>
  );
}
